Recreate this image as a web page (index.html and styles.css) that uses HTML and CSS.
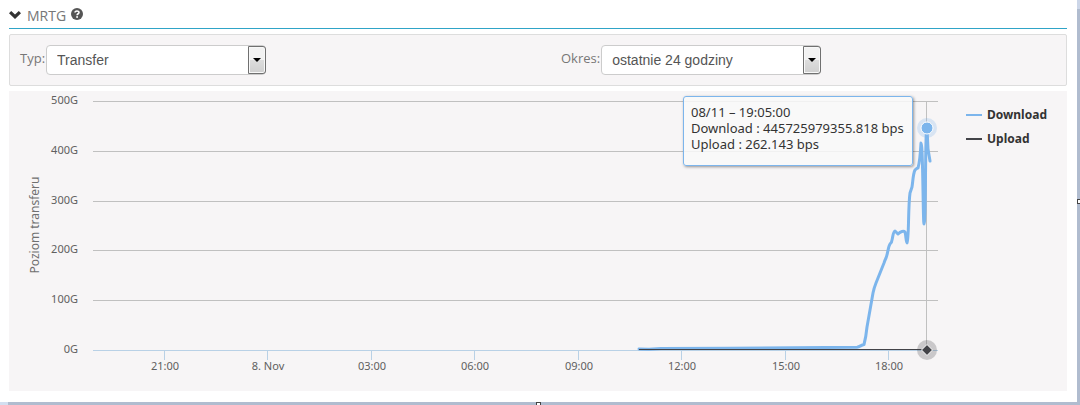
FILE: index.html
```html
<!DOCTYPE html>
<html lang="pl">
<head>
    <meta charset="UTF-8">
    <meta name="viewport" content="width=device-width, initial-scale=1.0">
    <title>MRTG</title>
    <link rel="stylesheet" href="styles.css">
</head>
<body>
    <main class="page">
        <header class="section-header">
            <svg class="chevron" width="12" height="8" viewBox="0 0 12 8" aria-hidden="true">
                <path d="M0 2.2 2.2 0 6 3.600 9.800 0 12 2.200 6 8z" fill="#333"/>
            </svg>
            <h1>MRTG</h1>
            <svg class="help" width="12" height="12" viewBox="0 0 12 12" aria-hidden="true">
                <circle cx="6" cy="6" r="6" fill="#555"/>
                <path d="M4 4.600C4 2.400 8 2.400 8 4.500 8 5.800 6.100 5.700 6.100 7.200" fill="none" stroke="#fff" stroke-width="1.600"/>
                <rect x="5.200" y="8.200" width="1.800" height="1.600" fill="#fff"/>
            </svg>
        </header>

        <form class="filters">
            <div class="field">
                <label for="type">Typ:</label>
                <div class="select">
                    <select id="type">
                        <option>Transfer</option>
                    </select>
                    <span class="arrow"></span>
                </div>
            </div>
            <div class="field">
                <label for="period">Okres:</label>
                <div class="select">
                    <select id="period">
                        <option>ostatnie 24 godziny</option>
                    </select>
                    <span class="arrow"></span>
                </div>
            </div>
        </form>

        <section class="chart">
            <svg class="plot" viewBox="0 0 940 300">
                <g class="grid">
                    <path d="M84 10.500H929M84 60.500H929M84 110.500H929M84 159.500H929M84 209.500H929"/>
                </g>
                <path class="axis" d="M84 259.500H929M155.500 260v9M258.500 260v9M362.500 260v9M465.500 260v9M569.500 260v9M672.500 260v9M776.500 260v9M879.500 260v9"/>
                <g class="labels y-labels">
                    <text x="69" y="13">500G</text>
                    <text x="69" y="63">400G</text>
                    <text x="69" y="113">300G</text>
                    <text x="69" y="162">200G</text>
                    <text x="69" y="212">100G</text>
                    <text x="69" y="262">0G</text>
                </g>
                <g class="labels x-labels">
                    <text x="156" y="279">21:00</text>
                    <text x="259" y="279">8. Nov</text>
                    <text x="363" y="279">03:00</text>
                    <text x="466" y="279">06:00</text>
                    <text x="570" y="279">09:00</text>
                    <text x="673" y="279">12:00</text>
                    <text x="777" y="279">15:00</text>
                    <text x="880" y="279">18:00</text>
                </g>
                <text class="axis-title" transform="translate(30 134) rotate(-90)">Poziom transferu</text>

                <path class="crosshair" d="M917.500 10V259"/>
                <path class="download" d="M630 258L640 258.300 652 257.500 720 257.300 848 256.300C851 256 852 254 855 253.500Q857 246 858 236L861 219 864 202Q865 197 867 192L869 187 875 172Q876 169 877 167C879 162 879 156 881 153Q883 151 883 149C884 145 884 141 886 140Q888 142 889 143Q891 141 893 140.500 895 140 896 141C897 144 897 152 898 152C900 150 899 116 901 102L903 96C904 90 904 83 906 79Q908 77 909 77 911 70 912 52C914 52 914 133 915 133C917 133 916 37 918 37L919 58 921 70"/>
                <path class="upload" d="M630 258.500H917"/>

                <circle cx="918" cy="37" r="10" fill="#7cb5ec" opacity=".25"/>
                <circle cx="918" cy="37" r="6" fill="#7cb5ec" stroke="#fff"/>
                <circle cx="918" cy="259" r="10" fill="#434348" opacity=".25"/>
                <path d="M918 253.500 923.500 259 918 264.500 912.500 259z" fill="#434348" stroke="#fff"/>
            </svg>
            <ul class="legend">
                <li><span class="line line-download"></span>Download</li>
                <li><span class="line line-upload"></span>Upload</li>
            </ul>
            <div class="tooltip">
                08/11 – 19:05:00<br>
                Download : 445725979355.818 bps<br>
                Upload : 262.143 bps
            </div>
        </section>
        <span class="handle handle-right"></span>
        <span class="handle handle-bottom"></span>
    </main>
</body>
</html>
```
FILE: styles.css
```css
* {
    box-sizing: border-box;
}
body {
    margin: 0;
    background: #fff;
    font-family: "Open Sans", sans-serif;
    color: #777;
}
.page {
    position: relative;
    overflow: hidden;
    min-height: 100vh;
    padding: 5px 13px 14px 9px;
    background:
        linear-gradient(90deg, #d3dff0 8px, #b0bccf 8px) bottom / 100% 3px no-repeat,
        linear-gradient(#ccd6e8 9px, #b0bccf 9px) right / 3px 100% no-repeat;
}
.section-header {
    display: flex;
    align-items: flex-start;
    height: 24px;
    border-bottom: 1px solid #2fa4c7;
}
.section-header h1 {
    margin: 0 5px 0 6px;
    font-size: 14px;
    font-weight: 400;
    line-height: 22px;
}
.chevron {
    margin-top: 6px;
}
.help {
    margin-top: 3px;
}
.filters {
    display: grid;
    grid-template-columns: 1fr 1fr;
    gap: 46px;
    margin: 5px 0;
    padding: 10px;
    background: #f7f5f6;
    border: 1px solid #ddd;
    border-radius: 2px;
}
.field {
    display: flex;
    align-items: center;
    gap: 1px;
}
.field label {
    font-size: 13px;
    line-height: 26px;
    padding-bottom: 4px;
}
.select {
    position: relative;
    width: 220px;
}
.select select {
    display: block;
    appearance: none;
    width: 100%;
    height: 30px;
    padding: 0 20px 0 10px;
    border: 1px solid #ccc;
    border-radius: 4px;
    background: #fff;
    color: #555;
    font: 14px "Liberation Sans", Arial, sans-serif;
}
.arrow {
    position: absolute;
    top: 1px;
    right: 0;
    width: 18px;
    height: 28px;
    border: 1px solid #707070;
    border-radius: 0 3px 3px 0;
    background: linear-gradient(#f2f2f2 50%, #ddd 50%, #cfcfcf);
    box-shadow: inset 0 0 0 1px #f8f8f8;
    pointer-events: none;
}
.arrow::after {
    content: "";
    position: absolute;
    top: 11px;
    left: 4px;
    border: 4px solid transparent;
    border-top-color: #000;
    border-bottom: 0;
}
.chart {
    position: relative;
    display: flex;
    align-items: flex-start;
    background: #f7f5f6;
    font-family: "Noto Sans", sans-serif;
}
.plot {
    flex: 1;
    min-width: 0;
}
.grid {
    stroke: #c0c0c0;
}
.axis {
    fill: none;
    stroke: #b9d1e6;
}
.labels {
    font-size: 11px;
    fill: #606060;
}
.y-labels {
    text-anchor: end;
}
.x-labels {
    text-anchor: middle;
}
.axis-title {
    font-size: 12px;
    fill: #707070;
    text-anchor: middle;
}
.crosshair {
    stroke: #c0c0c0;
}
.download {
    fill: none;
    stroke: #7cb5ec;
    stroke-width: 3;
    stroke-linejoin: round;
    stroke-linecap: round;
}
.upload {
    stroke: #434348;
}
.legend {
    width: 118px;
    margin: 0;
    padding: 12px 0 0 17px;
    list-style: none;
    color: #333;
    font-size: 12px;
    font-weight: 700;
    line-height: 24px;
}
.legend li {
    display: flex;
    align-items: center;
    gap: 5px;
}
.line {
    width: 16px;
    height: 2px;
}
.line-download {
    background: #7cb5ec;
}
.line-upload {
    background: #434348;
}
.tooltip {
    position: absolute;
    top: 5px;
    right: 154px;
    width: 230px;
    height: 70px;
    padding: 7px;
    border: 1px solid #7cb5ec;
    border-radius: 3px;
    background: rgba(249, 249, 249, 0.85);
    box-shadow: 1px 1px 3px rgba(0, 0, 0, 0.4);
    color: #333;
    font-size: 13px;
    line-height: 16px;
    white-space: nowrap;
}
.handle {
    position: absolute;
    width: 5px;
    height: 5px;
    border: 1px solid #444;
    background: #fff;
}
.handle-right {
    top: calc(50% - 4px);
    right: -2px;
}
.handle-bottom {
    left: calc(50% - 4px);
    bottom: -2px;
}
```
